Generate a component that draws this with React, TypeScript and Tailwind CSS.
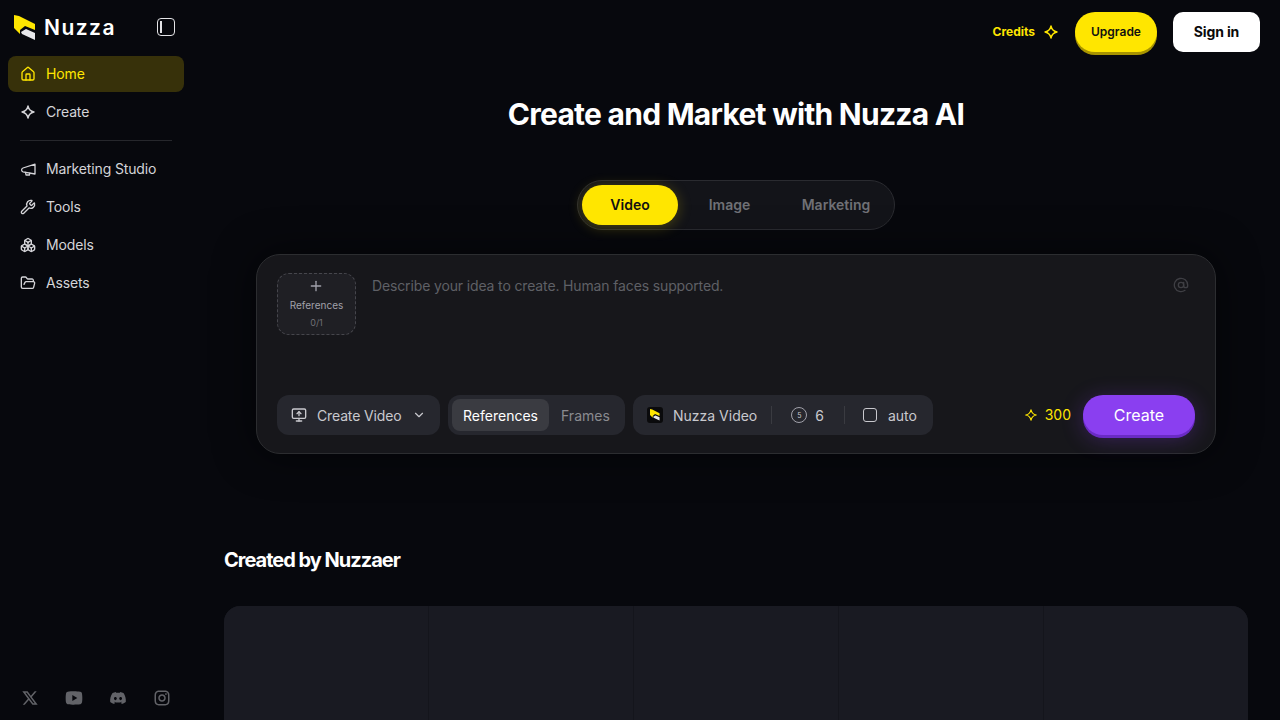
import React from 'react';
import { House, Wrench, Boxes, FolderOpen, Plus, AtSign, MonitorUp, ChevronDown } from 'lucide-react';
import { RiTwitterXLine, RiYoutubeFill, RiDiscordFill, RiInstagramLine } from 'react-icons/ri';

// four point star used for credits and the Create item
function Star({ className }: { className?: string }) {
  return (
    <svg viewBox="0 0 16 16" fill="none" stroke="currentColor" strokeWidth="1.4" strokeLinejoin="round" className={className}>
      <path d="M8 2 Q9 7 14 8 Q9 9 8 14 Q7 9 2 8 Q7 7 8 2 Z" />
    </svg>
  );
}

function LogoMark({ className }: { className?: string }) {
  return (
    <svg viewBox="0 0 22 26" className={className}>
      <path d="M0 0 L5 1 L21 9 L21 15 L11 11 L6 15 L6 19 L0 13 Z" fill="#ffe600" />
      <path d="M7 17 L12 14 L21 18 L21 25 L8 19 Z" fill="#e8e8ec" />
    </svg>
  );
}

function MegaphoneIcon() {
  return (
    <svg viewBox="0 0 16 16" fill="none" stroke="currentColor" strokeWidth="1.3" strokeLinejoin="round" strokeLinecap="round" className="w-4 h-4">
      <path d="M15 3.2 L3 7 Q1.6 7.5 1.6 9 Q1.6 10.5 3 10.8 L15 13 Z" />
      <path d="M5.5 11.4 L6 14 L9.4 14 L9.8 12.2" />
    </svg>
  );
}

const navTop = [
  { label: 'Home', icon: <House size={16} />, active: true },
  { label: 'Create', icon: <Star className="w-4 h-4" />, active: false },
];

const navBottom = [
  { label: 'Marketing Studio', icon: <MegaphoneIcon /> },
  { label: 'Tools', icon: <Wrench size={16} /> },
  { label: 'Models', icon: <Boxes size={16} /> },
  { label: 'Assets', icon: <FolderOpen size={16} /> },
];

function NavItem({ label, icon, active }: { label: string; icon: React.ReactNode; active?: boolean }) {
  return (
    <div
      className={
        active
          ? 'h-9 flex items-center gap-[10px] px-3 rounded-lg bg-[#37310a] text-[#ffe600] text-sm tracking-[-0.01em]'
          : 'h-9 flex items-center gap-[10px] px-3 rounded-lg text-[#d4d4d8] text-sm tracking-[-0.01em]'
      }
    >
      <span className="w-4 h-4 shrink-0">{icon}</span>
      <span>{label}</span>
    </div>
  );
}

function Sidebar() {
  return (
    <aside className="w-[192px] shrink-0 h-[720px] flex flex-col px-2 bg-[#07080d]">
      <div className="h-[56px] shrink-0 flex items-center pl-[6px] pr-[9px] justify-between">
        <div className="flex items-center gap-2">
          <LogoMark className="w-[22px] h-[26px]" />
          <span className="-mt-[2px] text-white text-[21px] leading-none font-semibold tracking-[0.07em]">Nuzza</span>
        </div>
        <div className="-mt-[3px] w-[18px] h-[18px] rounded-[4px] border-[1.5px] border-[#e4e4e7] pl-[2px] py-[2px]">
          <div className="w-[1.5px] h-full bg-[#e4e4e7]" />
        </div>
      </div>
      <div className="flex flex-col gap-[2px]">
        {navTop.map((n) => (
          <NavItem key={n.label} {...n} />
        ))}
      </div>
      <div className="mx-3 my-[10px] h-px bg-[#26272c]" />
      <div className="flex flex-col gap-[2px]">
        {navBottom.map((n) => (
          <NavItem key={n.label} {...n} />
        ))}
      </div>
      <div className="mt-auto mb-[12px] flex items-center text-[#626368]">
        <div className="w-[44px] flex justify-center"><RiTwitterXLine size={18} /></div>
        <div className="w-[44px] flex justify-center"><RiYoutubeFill size={20} /></div>
        <div className="w-[44px] flex justify-center"><RiDiscordFill size={18} /></div>
        <div className="w-[44px] flex justify-center"><RiInstagramLine size={18} /></div>
      </div>
    </aside>
  );
}

function Header() {
  return (
    <div className="h-[64px] flex items-center justify-end pr-5">
      <span className="text-[#ffe600] text-xs font-bold">Credits</span>
      <Star className="w-4 h-4 text-[#ffe600] ml-2" />
      <button className="ml-4 w-[82px] h-10 rounded-[20px] bg-[#ffe600] text-[#111] text-xs font-semibold shadow-[0_3px_0_#a89400]">
        Upgrade
      </button>
      <button className="ml-4 w-[87px] h-10 rounded-[10px] bg-white text-[#0a0a0a] text-sm font-bold tracking-[-0.01em]">Sign in</button>
    </div>
  );
}

function Tabs() {
  return (
    <div className="mt-[48px] mx-auto w-[318px] h-[50px] rounded-[25px] border border-[#2a2b30] bg-[#131419] flex items-center pl-1">
      <div className="w-[96px] h-10 rounded-[20px] bg-[#ffe600] text-[#111] text-sm font-semibold flex items-center justify-center shadow-[0_2px_14px_rgba(252,224,0,0.25)]">
        Video
      </div>
      <div className="w-[103px] text-center text-sm font-semibold text-[#6f7075]">Image</div>
      <div className="w-[110px] text-center text-sm font-semibold text-[#6f7075]">Marketing</div>
    </div>
  );
}

function Composer() {
  return (
    <div className="mt-6 mx-auto w-[960px] h-[200px] rounded-3xl border border-[#2c2d30] bg-[#17171b] pt-[18px] pb-[18px] pl-5 pr-5 flex flex-col shadow-[0_0_40px_rgba(0,0,0,0.6)]">
      <div className="flex flex-1 items-start">
        <div className="w-[79px] h-[62px] rounded-xl border border-dashed border-[#46464c] bg-[#1f1f24] flex flex-col items-center text-[#a1a1aa]">
          <Plus size={16} className="-ml-[1px] mt-[4px]" />
          <span className="text-[10px] leading-none mt-[6px]">References</span>
          <span className="text-[9px] leading-none mt-[8px] text-[#6f7075]">0/1</span>
        </div>
        <div className="ml-4 flex-1 text-sm leading-[26px] tracking-[-0.01em] text-[#5f6066]">Describe your idea to create. Human faces supported.</div>
        <AtSign size={16} className="mt-[4px] mr-[6px] text-[#3f3f44]" />
      </div>
      <div className="flex items-center text-sm">
        <div className="h-10 w-[163px] rounded-xl bg-[#26272e] flex items-center pl-[14px] text-[#c9c9ce]">
          <MonitorUp size={16} />
          <span className="ml-[10px] mt-px tracking-[-0.01em]">Create Video</span>
          <ChevronDown size={14} className="ml-[11px]" />
        </div>
        <div className="ml-2 h-10 w-[177px] rounded-xl bg-[#26272e] flex items-center pl-1">
          <div className="w-[97px] h-8 pt-px rounded-lg bg-[#3a3b41] text-white flex items-center justify-center">References</div>
          <div className="ml-3 mt-px text-[#8a8b90]">Frames</div>
        </div>
        <div className="ml-2 h-10 w-[300px] rounded-xl bg-[#26272e] flex items-center pl-[14px] text-[#c9c9ce]">
          <div className="w-4 h-4 rounded-[3px] bg-[#0a0a0c] flex items-center justify-center">
            <LogoMark className="w-[10px] h-3" />
          </div>
          <span className="ml-[10px] mt-px">Nuzza Video</span>
          <div className="ml-[14px] w-px h-[18px] bg-[#3a3b41]" />
          <div className="ml-[19px] w-4 h-4 rounded-full border border-[#a1a1aa] flex items-center justify-center text-[7px] leading-none">5</div>
          <span className="ml-[8px] mt-px">6</span>
          <div className="ml-5 w-px h-[18px] bg-[#3a3b41]" />
          <div className="ml-[18px] w-[14px] h-[14px] rounded-[3px] border-[1.5px] border-[#c9c9ce]" />
          <span className="ml-[11px] mt-px">auto</span>
        </div>
        <div className="ml-auto flex items-center text-[#ffe600]">
          <Star className="w-[14px] h-[14px]" />
          <span className="ml-[7px]">300</span>
        </div>
        <button className="ml-3 w-[112px] h-10 rounded-[20px] bg-[#8a3ff0] text-white text-base shadow-[0_3px_0_#6a2bc4,0_4px_22px_rgba(138,63,240,0.3)]">
          Create
        </button>
      </div>
    </div>
  );
}

export default function App() {
  return (
    <div className="w-[1280px] h-[720px] overflow-hidden flex bg-[#07080d] font-['Inter',sans-serif]">
      <Sidebar />
      <main className="flex-1 min-w-0 h-[720px] overflow-hidden">
        <Header />
        <h1 className="mt-[32px] text-center text-white text-3xl leading-9 font-bold tracking-tight">Create and Market with Nuzza AI</h1>
        <Tabs />
        <Composer />
        <h2 className="mt-[92px] ml-8 text-white text-xl leading-7 font-bold tracking-[-0.05em]">Created by Nuzzaer</h2>
        <div className="mt-8 mx-8 h-[200px] rounded-t-2xl overflow-hidden grid grid-cols-5 gap-px bg-[#14151c]">
          {[0, 1, 2, 3, 4].map((i) => (
            <div key={i} className="bg-[#191a22]" />
          ))}
        </div>
      </main>
    </div>
  );
}
